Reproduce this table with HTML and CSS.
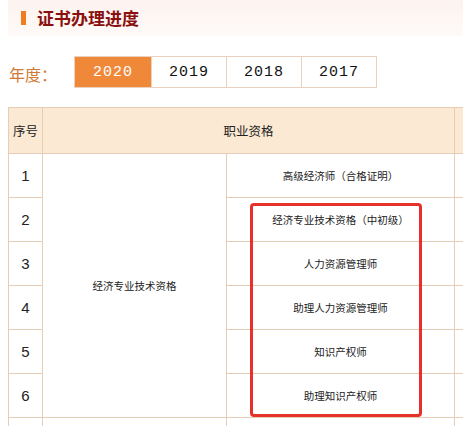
FILE: index.html
```html
<!DOCTYPE html>
<html lang="zh-CN">
<head>
<meta charset="utf-8">
<link rel="stylesheet" href="styles.css">
</head>
<body>
<div class="page">
  <div class="title-bar">
    <span class="title-mark"></span>
    <h1 class="title">证书办理进度</h1>
  </div>
  <div class="years">
    <span class="years-label">年度：</span>
    <div class="tabs">
      <span class="tab active">2020</span>
      <span class="tab">2019</span>
      <span class="tab">2018</span>
      <span class="tab">2017</span>
    </div>
  </div>
  <div class="table-wrap">
    <table class="grid">
      <colgroup>
        <col class="c1"><col class="c2"><col class="c3"><col class="c4">
      </colgroup>
      <thead>
        <tr><th>序号</th><th colspan="2">职业资格</th><th></th></tr>
      </thead>
      <tbody>
        <tr><td class="num">1</td><td rowspan="6">经济专业技术资格</td><td>高级经济师（合格证明）</td><td></td></tr>
        <tr><td class="num">2</td><td>经济专业技术资格（中初级）</td><td></td></tr>
        <tr><td class="num">3</td><td>人力资源管理师</td><td></td></tr>
        <tr><td class="num">4</td><td>助理人力资源管理师</td><td></td></tr>
        <tr><td class="num">5</td><td>知识产权师</td><td></td></tr>
        <tr><td class="num">6</td><td>助理知识产权师</td><td></td></tr>
        <tr class="tail"><td></td><td></td><td></td><td></td></tr>
      </tbody>
    </table>
    <div class="highlight"></div>
  </div>
</div>
</body>
</html>
```

FILE: styles.css
```css
html, body {
  margin: 0;
  padding: 0;
  background: #fff;
}
.page {
  width: 463px;
  height: 426px;
  overflow: hidden;
  font-family: "Noto Sans CJK SC", "Noto Sans", sans-serif;
  color: #222;
}
.title-bar {
  display: flex;
  align-items: center;
  margin-left: 8px;
  height: 36px;
  padding-left: 13px;
  background: linear-gradient(180deg, #fdf3ef 0%, #fefaf8 100%);
}
.title-mark {
  width: 5px;
  height: 14px;
  background: #f07c1e;
  margin-right: 11px;
}
.title {
  margin: 0;
  font-size: 17px;
  font-weight: bold;
  color: #8a1010;
  line-height: 20px;
}
.years {
  display: flex;
  align-items: center;
  margin-top: 20px;
  padding-left: 9px;
  height: 32px;
}
.years-label {
  width: 65px;
  font-size: 16px;
  color: #cf7a36;
  line-height: 20px;
  padding-top: 3px;
}
.tabs {
  display: flex;
  border: 1px solid #ebd2c0;
  height: 30px;
}
.tab {
  width: 74px;
  display: flex;
  align-items: center;
  justify-content: center;
  font-family: "Liberation Mono", monospace;
  font-size: 15px;
  letter-spacing: 1px;
  color: #111;
  border-left: 1px solid #ebd2c0;
}
.tab:first-child {
  border-left: none;
  width: 76px;
}
.tab.active {
  background: #f0883a;
  color: #fff;
}
.table-wrap {
  position: relative;
  margin-top: 19px;
  margin-left: 8px;
  width: 520px;
}
.grid {
  border-collapse: collapse;
  table-layout: fixed;
  width: 520px;
}
.c1 { width: 34px; }
.c2 { width: 184px; }
.c3 { width: 228px; }
.c4 { width: 74px; }
.grid th, .grid td {
  border: 1px solid #e6cdb6;
  text-align: center;
  padding: 0;
}
.grid th {
  height: 45px;
  background: #fbe9d4;
  font-weight: normal;
  font-size: 12.5px;
  color: #222;
}
.grid td {
  height: 43px;
  font-size: 10.5px;
  color: #222;
}
.grid td.num {
  font-family: "Liberation Sans", sans-serif;
  font-size: 15px;
  color: #222;
}
.grid tr.tail td {
  height: 20px;
}
.highlight {
  position: absolute;
  left: 242px;
  top: 96px;
  width: 172px;
  height: 214px;
  box-sizing: border-box;
  border: 3px solid #e8302a;
  border-radius: 4px;
}
```
